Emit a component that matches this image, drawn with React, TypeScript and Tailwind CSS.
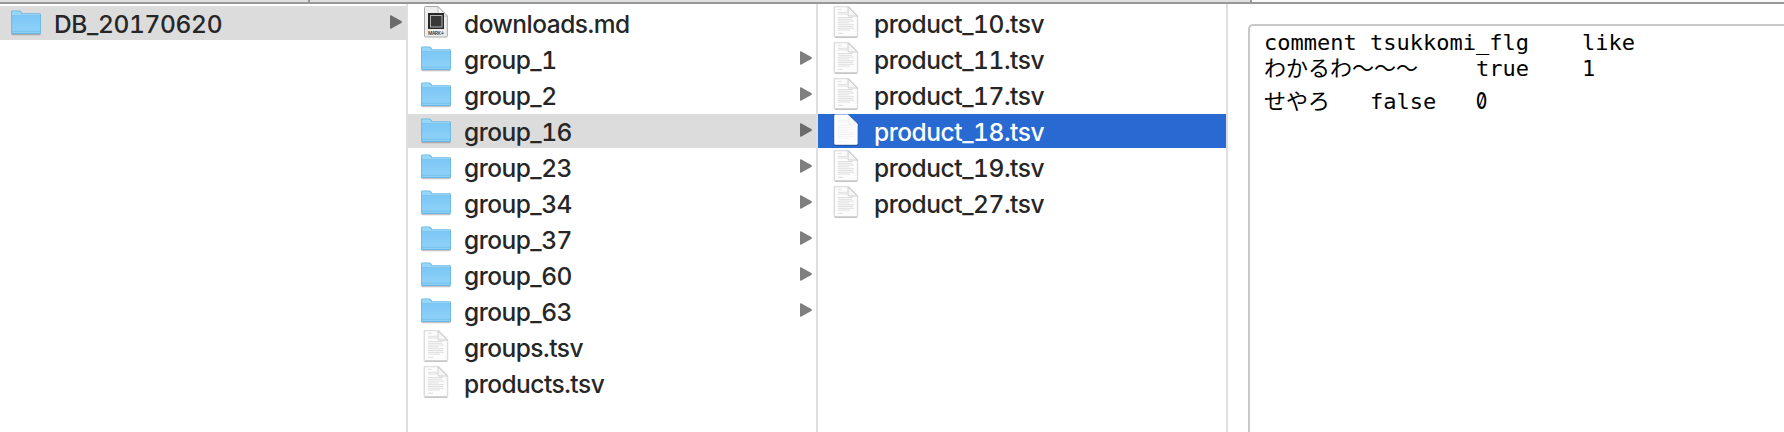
import React from "react";

function FolderIcon() {
  return (
    <svg width="32" height="28" viewBox="0 0 32 28" className="shrink-0">
      <defs>
        <linearGradient id="folder" x1="0" y1="0" x2="0" y2="1">
          <stop offset="0" stopColor="#7cc7f4" />
          <stop offset="1" stopColor="#8fd2f9" />
        </linearGradient>
      </defs>
      <path d="M1.500 25.500h29" stroke="#000" strokeOpacity=".22" strokeWidth="1.600" />
      <path d="M1 24V3Q1 1.500 2.500 1.500H9Q10.200 1.500 11 2.600L12.200 4.200H29.500Q31 4.200 31 5.700V24Q31 25 30 25H2Q1 25 1 24Z" fill="#65b3e0" />
      <path d="M1.800 5.500V3.200Q1.800 2.300 2.700 2.300H9Q9.700 2.300 10.200 3L11.700 5H29.300Q30.200 5 30.200 6.500H1.800Z" fill="#96d6f8" />
      <rect x="1.700" y="6.700" width="28.600" height="17.300" rx=".6" fill="url(#folder)" />
      <path d="M1.500 22.300h29" stroke="#6dbce8" strokeWidth=".8" />
    </svg>
  );
}

function Page({ children, selected }: { children?: React.ReactNode; selected?: boolean }) {
  return (
    <svg width="32" height="34" viewBox="0 0 32 34" className="shrink-0">
      <path d="M4.500 1.500Q4.500 .5 5.500 .5H18L27.300 9.800V30Q27.300 31 26.300 31H5.500Q4.500 31 4.500 30Z" fill="none" stroke="#000" strokeOpacity=".12" strokeWidth="2" />
      <path d="M5 30.900H27" stroke="#000" strokeOpacity=".3" strokeWidth="1" />
      <path d="M4.500 1.500Q4.500 .8 5.500 .8H18L27.300 10V29.500Q27.300 30.500 26.300 30.500H5.500Q4.500 30.500 4.500 29.500Z" fill={selected ? "#fff" : "#fcfcfc"} stroke={selected ? "#fff" : "#d0d0d0"} strokeWidth=".6" />
      {children}
      <path d="M18 1V9Q18 10 19 10H27.200Z" fill="#f6f6f6" stroke={selected ? "#ececec" : "#c8c8c8"} strokeWidth=".9" />
    </svg>
  );
}

function TextIcon({ selected }: { selected?: boolean }) {
  return (
    <Page selected={selected}>
      <g stroke="#000" strokeOpacity={selected ? 0.07 : 0.15} strokeWidth=".8">
        <path d="M8 3.300h3.500M8 6.300h9M8 8h9M8 11.500h15M8 13.300h14M8 15.100h16M8 16.900h11M8 18.700h16M8 20.500h15M8 22.300h16M8 24.100h12M8 27.300h5" />
      </g>
    </Page>
  );
}

function MarkdownIcon() {
  return (
    <svg width="32" height="34" viewBox="0 0 32 34" className="shrink-0">
      <path d="M4.500 1.500Q4.500 .5 5.500 .5H18L27.300 9.800V30Q27.300 31 26.300 31H5.500Q4.500 31 4.500 30Z" fill="#ededed" stroke="#a8a8a8" strokeWidth="1" />
      <path d="M18 1V9Q18 10 19 10H27.200Z" fill="#fafafa" stroke="#b8b8b8" strokeWidth=".9" />
      <rect x="8" y="7" width="16" height="16" fill="#282828" />
      <rect x="10.500" y="9.500" width="11.500" height="11.500" fill="#383838" stroke="#b4b4b4" strokeWidth="1" />
      <text x="8" y="28.500" textLength="16" fontSize="4.800" fontWeight="600" fontFamily="Inter, sans-serif" fill="#444">MARK↓</text>
    </svg>
  );
}

function Arrow({ dark }: { dark?: boolean }) {
  return (
    <svg width="12" height="14" viewBox="0 0 12 14" className="mt-[-2px] shrink-0">
      <path d="M0 1Q0 0 1 .3L11.300 6Q12.500 7 11.300 8L1 13.700Q0 14 0 13Z" fill={dark ? "#6b6b6b" : "#7f7f7f"} />
    </svg>
  );
}

type Kind = "folder" | "text" | "markdown";
type Item = { name: string; kind: Kind; state?: "path" | "selected" };

const root: Item[] = [{ name: "DB_20170620", kind: "folder", state: "path" }];

const groups: Item[] = [
  { name: "downloads.md", kind: "markdown" },
  { name: "group_1", kind: "folder" },
  { name: "group_2", kind: "folder" },
  { name: "group_16", kind: "folder", state: "path" },
  { name: "group_23", kind: "folder" },
  { name: "group_34", kind: "folder" },
  { name: "group_37", kind: "folder" },
  { name: "group_60", kind: "folder" },
  { name: "group_63", kind: "folder" },
  { name: "groups.tsv", kind: "text" },
  { name: "products.tsv", kind: "text" },
];

const products: Item[] = [
  { name: "product_10.tsv", kind: "text" },
  { name: "product_11.tsv", kind: "text" },
  { name: "product_17.tsv", kind: "text" },
  { name: "product_18.tsv", kind: "text", state: "selected" },
  { name: "product_19.tsv", kind: "text" },
  { name: "product_27.tsv", kind: "text" },
];

function Row({ item, className }: { item: Item; className: string }) {
  const tone =
    item.state === "selected"
      ? "bg-[#2869d2] text-white"
      : item.state === "path"
        ? "bg-[#dcdcdc] text-[#262626]"
        : "text-[#262626]";
  return (
    <li className={`flex h-[34px] items-center pr-1 ${className} ${tone}`}>
      {item.kind === "folder" && <FolderIcon />}
      {item.kind === "text" && <TextIcon selected={item.state === "selected"} />}
      {item.kind === "markdown" && <MarkdownIcon />}
      <span className="ml-3 flex-1 pt-px text-[24.5px] leading-[34px] font-[450] whitespace-nowrap tabular-nums">
        {item.name}
      </span>
      {item.kind === "folder" && <Arrow dark={item.state === "path"} />}
    </li>
  );
}

function Column({ items, className, rowClass }: { items: Item[]; className: string; rowClass: string }) {
  return (
    <ul className={`flex shrink-0 flex-col gap-0.5 border-r-2 border-[#dfdfdf] pt-0.5 ${className}`}>
      {items.map((item) => (
        <Row key={item.name} item={item} className={rowClass} />
      ))}
    </ul>
  );
}

export default function App() {
  return (
    <div className="flex h-[432px] w-[1784px] flex-col overflow-hidden bg-white font-['Inter',sans-serif]">
      <header className="flex h-1 shrink-0 border-b-2 border-[#989898]">
        <div className="w-[310px] border-r-2 border-[#989898] bg-[#e0e0e0]" />
        <div className="w-[942px] border-r-2 border-[#989898] bg-[#e0e0e0]" />
        <div className="flex-1 bg-[#fafafa]" />
      </header>
      <main className="flex min-h-0 flex-1">
        <Column items={root} className="w-[408px] tracking-[-0.36px]" rowClass="pl-[10px]" />
        <Column items={groups} className="w-[410px] tracking-[-0.5px]" rowClass="pl-[12px]" />
        <Column items={products} className="w-[410px] tracking-[-0.45px]" rowClass="pl-[12px]" />
        <section className="mt-5 ml-5 flex-1 rounded-tl-[5px] border-t-2 border-l-2 border-[#c8c8c8] pt-1 pl-[14px] font-['DejaVu_Sans_Mono','Noto_Sans_CJK_JP',monospace] text-[22px] text-black">
          <pre className="h-[26px] font-[inherit] leading-[26px]">{"comment\ttsukkomi_flg\tlike"}</pre>
          <pre className="h-[26px] font-[inherit] leading-[26px]">{"わかるわ〜〜〜\ttrue\t1"}</pre>
          <pre className="mt-[7px] h-[26px] font-[inherit] leading-[26px]">
            {"せやろ\tfalse\t"}
            <span className="inline-block w-[13px] origin-left scale-x-75 font-['Inter'] text-[23px] leading-none font-medium slashed-zero">0</span>
          </pre>
        </section>
      </main>
    </div>
  );
}
